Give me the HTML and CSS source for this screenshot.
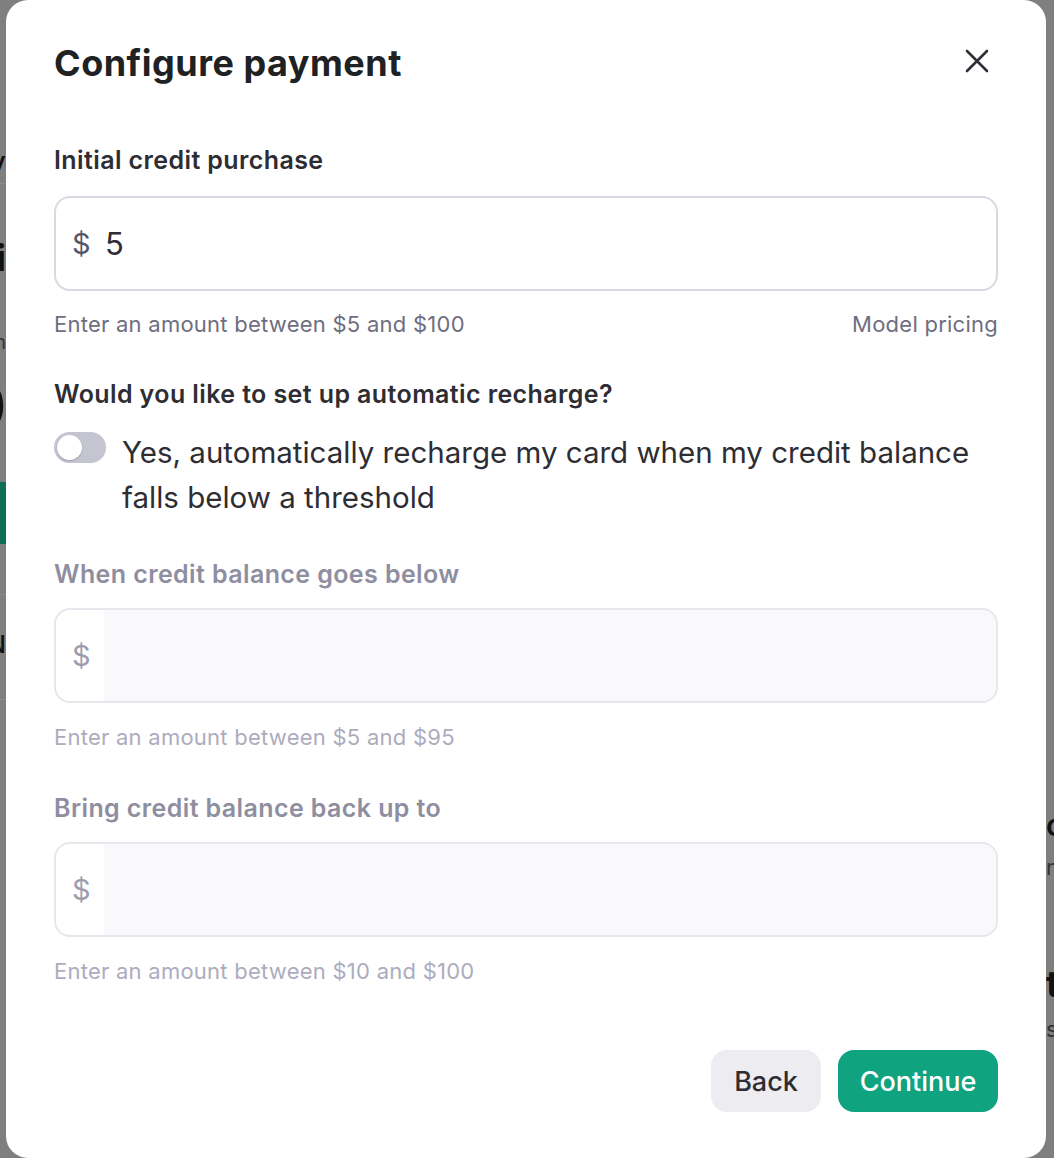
FILE: index.html
```html
<!DOCTYPE html>
<html lang="en">
<head>
<meta charset="utf-8">
<title>Configure payment</title>
<link rel="stylesheet" href="styles.css">
</head>
<body>
<div class="screen">
  <div class="bg-left">
    <div class="frag frag-y">y</div>
    <div class="bg-line line-1"></div>
    <div class="frag frag-i">Ai</div>
    <div class="frag frag-n">n</div>
    <div class="frag frag-0">0</div>
    <div class="bg-green"></div>
    <div class="bg-line line-2"></div>
    <div class="frag frag-N">N</div>
    <div class="bg-line line-3"></div>
  </div>

  <div class="modal">
    <div class="header">
      <h1 class="title">Configure payment</h1>
      <button class="close" aria-label="Close">
        <svg width="24" height="24" viewBox="0 0 24 24" fill="none" stroke="#2f2f37" stroke-width="2.6" stroke-linecap="round"><path d="M2 2L22 22M22 2L2 22"/></svg>
      </button>
    </div>

    <div class="label l-first">Initial credit purchase</div>
    <div class="field">
      <span class="cur">$</span>
      <span class="val">5</span>
    </div>
    <div class="help help-first">
      <span>Enter an amount between $5 and $100</span>
      <span>Model pricing</span>
    </div>

    <div class="label l-second">Would you like to set up automatic recharge?</div>
    <div class="toggle-row">
      <span class="toggle"><span class="knob"></span></span>
      <span class="toggle-text">Yes, automatically recharge my card when my credit balance falls below a threshold</span>
    </div>

    <div class="label disabled l-third">When credit balance goes below</div>
    <div class="field field-disabled">
      <span class="cur">$</span>
      <span class="fill"></span>
    </div>
    <div class="help disabled-help">Enter an amount between $5 and $95</div>

    <div class="label disabled l-fourth">Bring credit balance back up to</div>
    <div class="field field-disabled">
      <span class="cur">$</span>
      <span class="fill"></span>
    </div>
    <div class="help disabled-help">Enter an amount between $10 and $100</div>

    <div class="actions">
      <button class="btn btn-back">Back</button>
      <button class="btn btn-continue">Continue</button>
    </div>
  </div>

  <div class="bg-right">
    <div class="frag-r fr-c">co</div>
    <div class="frag-r fr-n">n</div>
    <div class="frag-r fr-t">t</div>
    <div class="frag-r fr-s">s</div>
  </div>
</div>
</body>
</html>
```

FILE: styles.css
```css
* { box-sizing: border-box; }

html, body {
  margin: 0;
  padding: 0;
  background: #7f7f7f;
  font-family: Inter, "Noto Sans", "Liberation Sans", sans-serif;
}

.screen {
  display: grid;
  grid-template-columns: 6px 1040px 8px;
  width: 1054px;
  height: 1158px;
  overflow: hidden;
}

/* background page fragments (dimmed by overlay) */
.bg-left, .bg-right {
  overflow: hidden;
  display: flex;
  flex-direction: column;
  color: #111;
  font-weight: 600;
}
.bg-left { align-items: flex-end; }
.bg-right { align-items: flex-start; }

.frag { white-space: nowrap; line-height: 1; }
.frag-y { margin-top: 146px; font-size: 34px; font-weight: 400; }
.bg-line { align-self: stretch; height: 1px; background: #8c8c8c; }
.line-1 { margin-top: 3px; }
.frag-i { margin-top: 56px; font-size: 36px; font-weight: 700; }
.frag-n { margin-top: 56px; font-size: 20px; font-weight: 400; color: #333; }
.frag-0 { margin-top: 24px; font-size: 60px; font-weight: 700; }
.bg-green { align-self: stretch; margin-top: 46px; height: 62px; background: #0b6e55; }
.line-2 { margin-top: 50px; }
.frag-N { margin-top: 38px; font-size: 24px; font-weight: 500; }
.line-3 { margin-top: 42px; }

.frag-r { white-space: nowrap; line-height: 1; }
.fr-c { margin-top: 810px; font-size: 30px; font-weight: 600; }
.fr-n { margin-top: 16px; font-size: 22px; font-weight: 400; color: #333; }
.fr-t { margin-top: 88px; font-size: 36px; font-weight: 700; }
.fr-s { margin-top: 16px; font-size: 22px; font-weight: 400; color: #333; }

/* modal */
.modal {
  background: #ffffff;
  border-radius: 22px;
  height: 1158px;
  padding: 41px 48px 0 48px;
  display: flex;
  flex-direction: column;
  color: #2d2d33;
}

.header {
  display: flex;
  justify-content: space-between;
  align-items: center;
  height: 44px;
}

.title {
  margin: 0;
  font-size: 36px;
  line-height: 44px;
  font-weight: 700;
  color: #202123;
  letter-spacing: 0.5px;
}

.close {
  border: 0;
  background: transparent;
  padding: 0;
  margin-right: 9px;
  margin-top: -5px;
  width: 24px;
  height: 24px;
  display: flex;
}

.label {
  font-size: 25px;
  line-height: 32px;
  font-weight: 600;
  color: #2d2d33;
  letter-spacing: 0.4px;
}
.label.disabled { color: #8e8ea0; }
.l-first { margin-top: 59px; }
.l-second { margin-top: 39px; }
.l-third { margin-top: 38px; }
.l-fourth { margin-top: 40px; }

.field {
  margin-top: 20px;
  height: 95px;
  border: 2px solid #d9d9e3;
  border-radius: 16px;
  display: flex;
  align-items: center;
  overflow: hidden;
}
.field .cur {
  font-size: 29px;
  color: #565869;
  padding-left: 16px;
  width: 48px;
  flex: none;
}
.field .val {
  font-size: 31px;
  color: #2d2d33;
  margin-left: 1px;
}

.field-disabled {
  margin-top: 18px;
  border-color: #e6e6ec;
  align-items: stretch;
}
.field-disabled .cur {
  color: #9c9cae;
  display: flex;
  align-items: center;
}
.field-disabled .fill {
  flex: 1;
  background: #f9f9fb;
}

.help {
  margin-top: 19px;
  font-size: 22px;
  line-height: 30px;
  color: #6e6e80;
  letter-spacing: 0.25px;
  display: flex;
  justify-content: space-between;
}
.help-first { margin-top: 18px; }
.disabled-help { color: #acacbe; }

.toggle-row {
  margin-top: 21px;
  display: flex;
  align-items: flex-start;
  gap: 16px;
}
.toggle {
  flex: none;
  width: 52px;
  height: 31px;
  margin-top: 1px;
  border-radius: 16px;
  background: #c5c5d2;
  display: flex;
  align-items: center;
  padding-left: 3px;
}
.knob {
  width: 25px;
  height: 25px;
  border-radius: 50%;
  background: #ffffff;
  box-shadow: 0 1px 2px rgba(0,0,0,0.2);
}
.toggle-text {
  font-size: 29.5px;
  line-height: 45px;
  color: #2d2d33;
  margin-top: -1px;
}

.actions {
  margin-top: 64px;
  display: flex;
  justify-content: flex-end;
  gap: 17px;
}
.btn {
  border: 0;
  height: 62px;
  border-radius: 16px;
  font-family: inherit;
  font-size: 27px;
  font-weight: 500;
  padding: 0 20px;
}
.btn-back {
  width: 110px;
  background: #ececf1;
  color: #2d2d33;
}
.btn-continue {
  width: 160px;
  background: #10a37f;
  color: #ffffff;
}
```
